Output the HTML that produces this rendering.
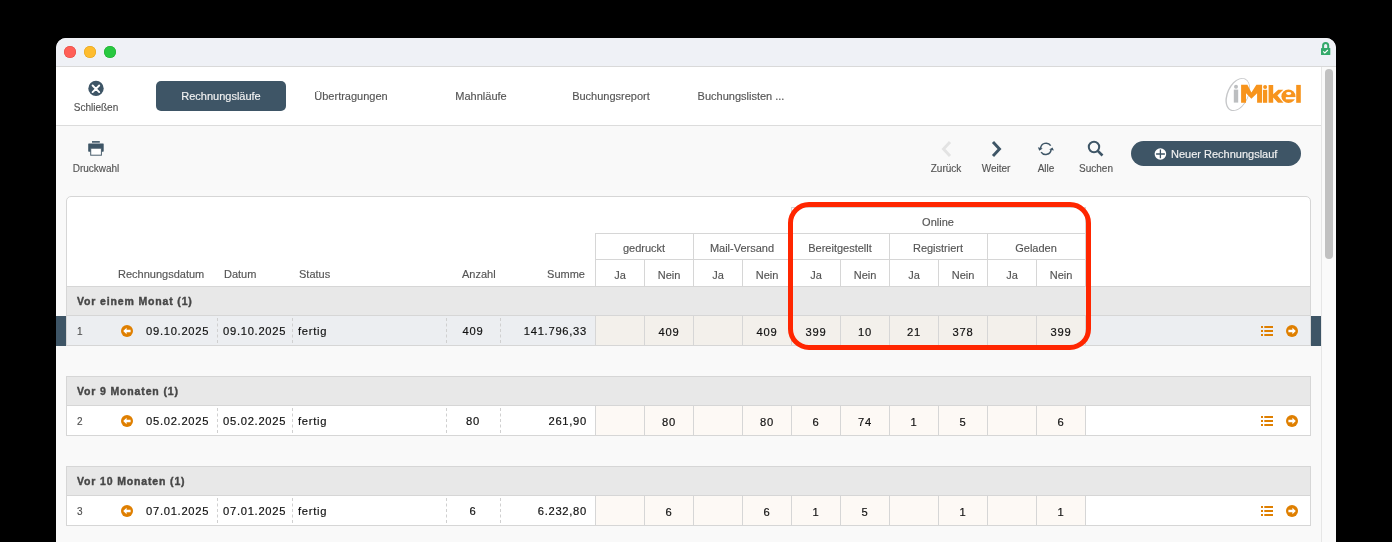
<!DOCTYPE html>
<html><head><meta charset="utf-8"><style>
html,body{margin:0;padding:0;}
body{width:1392px;height:542px;overflow:hidden;background:#000;position:relative;font-family:"Liberation Sans",sans-serif;}
.r{position:absolute;}
.t{position:absolute;white-space:nowrap;will-change:transform;-webkit-text-stroke-width:0.15px;}
</style></head><body>
<div class="r" style="left:56px;top:38px;width:1280px;height:520px;background:#f9f9f9;border-radius:10px 10px 0 0;"></div>
<div class="r" style="left:56px;top:38px;width:1280px;height:28px;background:#eff1f6;border-radius:10px 10px 0 0;"></div>
<div class="r" style="left:56px;top:66px;width:1280px;height:1px;background:#d9d9d9;"></div>
<div class="r" style="left:64px;top:46px;width:12px;height:12px;border-radius:50%;background:#ff5f57;box-shadow:inset 0 0 0 0.5px #e2463f;"></div>
<div class="r" style="left:84px;top:46px;width:12px;height:12px;border-radius:50%;background:#febc2e;box-shadow:inset 0 0 0 0.5px #e1a116;"></div>
<div class="r" style="left:104px;top:46px;width:12px;height:12px;border-radius:50%;background:#28c840;box-shadow:inset 0 0 0 0.5px #1aab29;"></div>
<svg class="r" style="left:1319px;top:40px" width="14" height="17" viewBox="0 0 14 17">
<path d="M4.1 8.5 V5.6 a2.55 2.55 0 0 1 5.1 0 V8.5" fill="none" stroke="#34a96a" stroke-width="2"/>
<rect x="2" y="8" width="9.3" height="7" rx="0.6" fill="#34a96a"/>
<path d="M4.2 11.4 l1.6 1.5 l3.1 -2.9" fill="none" stroke="#fff" stroke-width="1.1"/>
</svg>
<div class="r" style="left:56px;top:67px;width:1265px;height:58px;background:#ffffff;"></div>
<div class="r" style="left:56px;top:125px;width:1265px;height:1px;background:#dcdcdc;"></div>
<div class="r" style="left:1321px;top:67px;width:1px;height:480px;background:#e6e6e6;"></div>
<div class="r" style="left:1322px;top:67px;width:14px;height:480px;background:#fafafa;"></div>
<div class="r" style="left:1325px;top:69px;width:8px;height:190px;background:#c1c1c1;border-radius:4px;"></div>
<svg class="r" style="left:87px;top:79px" width="18" height="18" viewBox="0 0 18 18">
<circle cx="9" cy="9.4" r="7.7" fill="#3e5566"/>
<path d="M5.6 6.5 L12.2 13.1 M12.2 6.5 L5.6 13.1" stroke="#fff" stroke-width="1.9" stroke-linecap="round"/>
</svg>
<div class="t" style="left:-54px;width:300px;text-align:center;top:102.53px;font-size:10px;line-height:10px;color:#555555;font-weight:normal;">Schließen</div>
<div class="r" style="left:156px;top:81px;width:130px;height:30px;background:#3e5566;border-radius:5px;"></div>
<div class="t" style="left:71px;width:300px;text-align:center;top:90.69px;font-size:11px;line-height:11px;color:#f2f2f2;font-weight:normal;">Rechnungsläufe</div>
<div class="t" style="left:201px;width:300px;text-align:center;top:90.69px;font-size:11px;line-height:11px;color:#555555;font-weight:normal;">Übertragungen</div>
<div class="t" style="left:331px;width:300px;text-align:center;top:90.69px;font-size:11px;line-height:11px;color:#555555;font-weight:normal;">Mahnläufe</div>
<div class="t" style="left:461px;width:300px;text-align:center;top:90.69px;font-size:11px;line-height:11px;color:#555555;font-weight:normal;">Buchungsreport</div>
<div class="t" style="left:591px;width:300px;text-align:center;top:90.69px;font-size:11px;line-height:11px;color:#555555;font-weight:normal;">Buchungslisten ...</div>
<svg class="r" style="left:1220px;top:74px" width="90" height="40" viewBox="1220 74 90 40">
<g transform="rotate(25 1237.7 94.5)">
<path fill="#c6c7c9" fill-rule="evenodd" d="M1237.7 76.90 a10.8 17.6 0 1 0 0.001 0 Z M1238.00 77.70 a9.7 16.6 0 1 0 0.001 0 Z"/>
</g>
<g fill="#bcbec0"><circle cx="1236" cy="86.8" r="2"/><rect x="1233.8" y="89.6" width="4.4" height="13"/></g>
<g fill="#f7941d">
<path d="M1241.1 84.8 H1247.4 L1251.4 92.6 L1256.4 84.8 H1262.1 V102.8 H1257.1 V93.2 L1251.4 98.8 L1246 93.2 V102.8 H1241.1 Z"/>
<circle cx="1265.1" cy="86.9" r="2"/><rect x="1263" y="89.8" width="4.2" height="13"/>
<path d="M1268.6 84.9 H1273.2 V94.3 L1278.2 89.8 H1283.3 L1277.4 95.6 L1283.5 102.8 H1278 L1273.2 97.4 V102.8 H1268.6 Z"/>
<ellipse cx="1288.45" cy="96.2" rx="7.05" ry="6.8"/>
<rect x="1296.2" y="84.9" width="4.6" height="17.9"/>
</g>
<ellipse cx="1288.7" cy="93.55" rx="2.6" ry="1.45" fill="#fff"/>
<path d="M1285.8 97.1 H1296 V99.3 H1285.8 Z" fill="#fff"/>
</svg>
<svg class="r" style="left:88px;top:140px" width="16" height="17" viewBox="0 0 16 17">
<rect x="4" y="1.1" width="7.8" height="1.6" fill="#3e5566"/>
<rect x="0.2" y="3.5" width="15.5" height="8.2" rx="0.6" fill="#3e5566"/>
<rect x="2.7" y="8.2" width="10.7" height="7" fill="#fff" stroke="#4a5f6d" stroke-width="1"/>
</svg>
<div class="t" style="left:-54px;width:300px;text-align:center;top:163.53px;font-size:10px;line-height:10px;color:#555555;font-weight:normal;">Druckwahl</div>
<svg class="r" style="left:940px;top:140px" width="13" height="18" viewBox="0 0 13 18">
<path d="M10 2 L3.5 9 L10 16" fill="none" stroke="#e3e3e3" stroke-width="2.9"/>
</svg>
<svg class="r" style="left:990px;top:140px" width="13" height="18" viewBox="0 0 13 18">
<path d="M3 2 L9.5 9 L3 16" fill="none" stroke="#3e5566" stroke-width="2.9"/>
</svg>
<svg class="r" style="left:1037px;top:141px" width="18" height="16" viewBox="0 0 18 16">
<path d="M3.6 7.4 A5.5 5.5 0 0 1 13.7 4.7" fill="none" stroke="#3e5566" stroke-width="1.5"/>
<path d="M14.1 8.6 A5.5 5.5 0 0 1 4.1 11.1" fill="none" stroke="#3e5566" stroke-width="1.5"/>
<path d="M0.9 6.3 L5.7 7.4 L2.3 9.7 Z" fill="#3e5566"/>
<path d="M16.9 9.5 L12.2 8.5 L15.5 6.4 Z" fill="#3e5566"/>
</svg>
<svg class="r" style="left:1087px;top:140px" width="18" height="18" viewBox="0 0 18 18">
<circle cx="7" cy="7" r="5.2" fill="none" stroke="#3e5566" stroke-width="2"/>
<path d="M10.8 10.8 L15.5 15.5" stroke="#3e5566" stroke-width="2.6"/>
</svg>
<div class="t" style="left:796px;width:300px;text-align:center;top:163.53px;font-size:10px;line-height:10px;color:#555555;font-weight:normal;">Zurück</div>
<div class="t" style="left:846px;width:300px;text-align:center;top:163.53px;font-size:10px;line-height:10px;color:#555555;font-weight:normal;">Weiter</div>
<div class="t" style="left:896px;width:300px;text-align:center;top:163.53px;font-size:10px;line-height:10px;color:#555555;font-weight:normal;">Alle</div>
<div class="t" style="left:946px;width:300px;text-align:center;top:163.53px;font-size:10px;line-height:10px;color:#555555;font-weight:normal;">Suchen</div>
<div class="r" style="left:1131px;top:141px;width:170px;height:25px;background:#3e5566;border-radius:12.5px;"></div>
<svg class="r" style="left:1154px;top:148px" width="13" height="13" viewBox="0 0 13 13">
<circle cx="6.4" cy="6.0" r="5.8" fill="#fff"/>
<path d="M6.4 1.5 V10.2 M2.1 6.0 H10.9" stroke="#3e5566" stroke-width="1.3"/>
</svg>
<div class="t" style="left:1171px;top:148.69px;font-size:11px;line-height:11px;color:#f2f2f2;font-weight:normal;">Neuer Rechnungslauf</div>
<div class="r" style="left:66px;top:196px;width:1245px;height:150px;background:#ffffff;border:1px solid #d6d6d6;border-radius:5px 5px 0 0;box-sizing:border-box;"></div>
<div class="t" style="left:118px;top:268.69px;font-size:11px;line-height:11px;color:#555555;font-weight:normal;">Rechnungsdatum</div>
<div class="t" style="left:223.5px;top:268.69px;font-size:11px;line-height:11px;color:#555555;font-weight:normal;">Datum</div>
<div class="t" style="left:298.5px;top:268.69px;font-size:11px;line-height:11px;color:#555555;font-weight:normal;">Status</div>
<div class="t" style="left:461.5px;top:268.69px;font-size:11px;line-height:11px;color:#555555;font-weight:normal;">Anzahl</div>
<div class="t" style="left:285px;width:300px;text-align:right;top:268.69px;font-size:11px;line-height:11px;color:#555555;font-weight:normal;">Summe</div>
<div class="r" style="left:791px;top:207px;width:295px;height:1px;background:#d6d6d6;"></div>
<div class="r" style="left:595px;top:233px;width:491px;height:1px;background:#d6d6d6;"></div>
<div class="r" style="left:595px;top:259px;width:491px;height:1px;background:#d6d6d6;"></div>
<div class="r" style="left:595px;top:233px;width:1px;height:53px;background:#d6d6d6;"></div>
<div class="r" style="left:693px;top:233px;width:1px;height:53px;background:#d6d6d6;"></div>
<div class="r" style="left:791px;top:207px;width:1px;height:79px;background:#d6d6d6;"></div>
<div class="r" style="left:889px;top:233px;width:1px;height:53px;background:#d6d6d6;"></div>
<div class="r" style="left:987px;top:233px;width:1px;height:53px;background:#d6d6d6;"></div>
<div class="r" style="left:1085px;top:207px;width:1px;height:79px;background:#d6d6d6;"></div>
<div class="r" style="left:644px;top:259px;width:1px;height:27px;background:#d6d6d6;"></div>
<div class="r" style="left:742px;top:259px;width:1px;height:27px;background:#d6d6d6;"></div>
<div class="r" style="left:840px;top:259px;width:1px;height:27px;background:#d6d6d6;"></div>
<div class="r" style="left:938px;top:259px;width:1px;height:27px;background:#d6d6d6;"></div>
<div class="r" style="left:1036px;top:259px;width:1px;height:27px;background:#d6d6d6;"></div>
<div class="t" style="left:788px;width:300px;text-align:center;top:216.69px;font-size:11px;line-height:11px;color:#555555;font-weight:normal;">Online</div>
<div class="t" style="left:494px;width:300px;text-align:center;top:242.69px;font-size:11px;line-height:11px;color:#555555;font-weight:normal;">gedruckt</div>
<div class="t" style="left:592px;width:300px;text-align:center;top:242.69px;font-size:11px;line-height:11px;color:#555555;font-weight:normal;">Mail-Versand</div>
<div class="t" style="left:690px;width:300px;text-align:center;top:242.69px;font-size:11px;line-height:11px;color:#555555;font-weight:normal;">Bereitgestellt</div>
<div class="t" style="left:788px;width:300px;text-align:center;top:242.69px;font-size:11px;line-height:11px;color:#555555;font-weight:normal;">Registriert</div>
<div class="t" style="left:886px;width:300px;text-align:center;top:242.69px;font-size:11px;line-height:11px;color:#555555;font-weight:normal;">Geladen</div>
<div class="t" style="left:469.5px;width:300px;text-align:center;top:269.69px;font-size:11px;line-height:11px;color:#555555;font-weight:normal;">Ja</div>
<div class="t" style="left:518.5px;width:300px;text-align:center;top:269.69px;font-size:11px;line-height:11px;color:#555555;font-weight:normal;">Nein</div>
<div class="t" style="left:567.5px;width:300px;text-align:center;top:269.69px;font-size:11px;line-height:11px;color:#555555;font-weight:normal;">Ja</div>
<div class="t" style="left:616.5px;width:300px;text-align:center;top:269.69px;font-size:11px;line-height:11px;color:#555555;font-weight:normal;">Nein</div>
<div class="t" style="left:665.5px;width:300px;text-align:center;top:269.69px;font-size:11px;line-height:11px;color:#555555;font-weight:normal;">Ja</div>
<div class="t" style="left:714.5px;width:300px;text-align:center;top:269.69px;font-size:11px;line-height:11px;color:#555555;font-weight:normal;">Nein</div>
<div class="t" style="left:763.5px;width:300px;text-align:center;top:269.69px;font-size:11px;line-height:11px;color:#555555;font-weight:normal;">Ja</div>
<div class="t" style="left:812.5px;width:300px;text-align:center;top:269.69px;font-size:11px;line-height:11px;color:#555555;font-weight:normal;">Nein</div>
<div class="t" style="left:861.5px;width:300px;text-align:center;top:269.69px;font-size:11px;line-height:11px;color:#555555;font-weight:normal;">Ja</div>
<div class="t" style="left:910.5px;width:300px;text-align:center;top:269.69px;font-size:11px;line-height:11px;color:#555555;font-weight:normal;">Nein</div>
<div class="r" style="left:67px;top:287px;width:1243px;height:28px;background:#e8e8e8;"></div>
<div class="r" style="left:67px;top:286px;width:1243px;height:1px;background:#d6d6d6;"></div>
<div class="r" style="left:67px;top:315px;width:1243px;height:1px;background:#d6d6d6;"></div>
<div class="t" style="left:77px;top:296.11px;font-size:10.5px;line-height:10.5px;color:#474747;font-weight:bold;letter-spacing:0.85px;-webkit-text-stroke:0.4px #474747;">Vor einem Monat (1)</div>
<div class="r" style="left:67px;top:316px;width:1243px;height:29px;background:#eceef1;"></div>
<div class="r" style="left:595px;top:316px;width:490px;height:29px;background:#f3f0eb;"></div>
<div class="r" style="left:595px;top:316px;width:1px;height:29px;background:#d6d6d6;"></div>
<div class="r" style="left:644px;top:316px;width:1px;height:29px;background:#d6d6d6;"></div>
<div class="r" style="left:693px;top:316px;width:1px;height:29px;background:#d6d6d6;"></div>
<div class="r" style="left:742px;top:316px;width:1px;height:29px;background:#d6d6d6;"></div>
<div class="r" style="left:791px;top:316px;width:1px;height:29px;background:#d6d6d6;"></div>
<div class="r" style="left:840px;top:316px;width:1px;height:29px;background:#d6d6d6;"></div>
<div class="r" style="left:889px;top:316px;width:1px;height:29px;background:#d6d6d6;"></div>
<div class="r" style="left:938px;top:316px;width:1px;height:29px;background:#d6d6d6;"></div>
<div class="r" style="left:987px;top:316px;width:1px;height:29px;background:#d6d6d6;"></div>
<div class="r" style="left:1036px;top:316px;width:1px;height:29px;background:#d6d6d6;"></div>
<div class="r" style="left:1085px;top:316px;width:1px;height:29px;background:#d6d6d6;"></div>
<div class="r" style="left:66px;top:345px;width:1245px;height:1px;background:#d6d6d6;"></div>
<div class="r" style="left:56px;top:316px;width:10px;height:30px;background:#3e5566;"></div>
<div class="r" style="left:1311px;top:316px;width:10px;height:30px;background:#3e5566;"></div>
<div class="r" style="left:217px;top:318px;width:0;height:25px;border-left:1px dashed #d0d0d0;"></div>
<div class="r" style="left:292px;top:318px;width:0;height:25px;border-left:1px dashed #d0d0d0;"></div>
<div class="r" style="left:446px;top:318px;width:0;height:25px;border-left:1px dashed #d0d0d0;"></div>
<div class="r" style="left:500px;top:318px;width:0;height:25px;border-left:1px dashed #d0d0d0;"></div>
<div class="t" style="left:76.5px;top:327.04px;font-size:10px;line-height:10px;color:#505050;font-weight:normal;-webkit-text-stroke:0.15px #505050;">1</div>
<svg class="r" style="left:120px;top:324px" width="14" height="14" viewBox="0 0 14 14">
<circle cx="7" cy="7" r="6" fill="#df7f00"/>
<path d="M3.2 7 L6.6 3.8 V5.8 H10.6 V8.2 H6.6 V10.2 Z" fill="#fff"/>
</svg>
<div class="t" style="left:146px;top:326.02px;font-size:11.2px;line-height:11.2px;color:#111111;font-weight:normal;letter-spacing:0.72px;-webkit-text-stroke:0.18px #111111;">09.10.2025</div>
<div class="t" style="left:223px;top:326.02px;font-size:11.2px;line-height:11.2px;color:#111111;font-weight:normal;letter-spacing:0.72px;-webkit-text-stroke:0.18px #111111;">09.10.2025</div>
<div class="t" style="left:298px;top:326.02px;font-size:11.2px;line-height:11.2px;color:#111111;font-weight:normal;letter-spacing:0.72px;-webkit-text-stroke:0.18px #111111;">fertig</div>
<div class="t" style="left:323px;width:300px;text-align:center;top:326.02px;font-size:11.2px;line-height:11.2px;color:#111111;font-weight:normal;letter-spacing:0.72px;-webkit-text-stroke:0.18px #111111;">409</div>
<div class="t" style="left:287px;width:300px;text-align:right;top:326.02px;font-size:11.2px;line-height:11.2px;color:#111111;font-weight:normal;letter-spacing:0.72px;-webkit-text-stroke:0.18px #111111;">141.796,33</div>
<div class="t" style="left:518.5px;width:300px;text-align:center;top:327.02px;font-size:11.2px;line-height:11.2px;color:#111111;font-weight:normal;letter-spacing:0.72px;-webkit-text-stroke:0.18px #111111;">409</div>
<div class="t" style="left:616.5px;width:300px;text-align:center;top:327.02px;font-size:11.2px;line-height:11.2px;color:#111111;font-weight:normal;letter-spacing:0.72px;-webkit-text-stroke:0.18px #111111;">409</div>
<div class="t" style="left:665.5px;width:300px;text-align:center;top:327.02px;font-size:11.2px;line-height:11.2px;color:#111111;font-weight:normal;letter-spacing:0.72px;-webkit-text-stroke:0.18px #111111;">399</div>
<div class="t" style="left:714.5px;width:300px;text-align:center;top:327.02px;font-size:11.2px;line-height:11.2px;color:#111111;font-weight:normal;letter-spacing:0.72px;-webkit-text-stroke:0.18px #111111;">10</div>
<div class="t" style="left:763.5px;width:300px;text-align:center;top:327.02px;font-size:11.2px;line-height:11.2px;color:#111111;font-weight:normal;letter-spacing:0.72px;-webkit-text-stroke:0.18px #111111;">21</div>
<div class="t" style="left:812.5px;width:300px;text-align:center;top:327.02px;font-size:11.2px;line-height:11.2px;color:#111111;font-weight:normal;letter-spacing:0.72px;-webkit-text-stroke:0.18px #111111;">378</div>
<div class="t" style="left:910.5px;width:300px;text-align:center;top:327.02px;font-size:11.2px;line-height:11.2px;color:#111111;font-weight:normal;letter-spacing:0.72px;-webkit-text-stroke:0.18px #111111;">399</div>
<svg class="r" style="left:1260px;top:325px" width="14" height="11" viewBox="0 0 14 11">
<rect x="1" y="1" width="2" height="2" fill="#df7f00"/><rect x="4.3" y="1" width="8.7" height="2" fill="#df7f00"/>
<rect x="1" y="5" width="2" height="2" fill="#df7f00"/><rect x="4.3" y="5" width="8.7" height="2" fill="#df7f00"/>
<rect x="1" y="9" width="2" height="2" fill="#df7f00"/><rect x="4.3" y="9" width="8.7" height="2" fill="#df7f00"/>
</svg>
<svg class="r" style="left:1285px;top:324px" width="14" height="14" viewBox="0 0 14 14">
<circle cx="7" cy="7" r="6" fill="#df7f00"/>
<path d="M10.8 7 L7.4 3.8 V5.8 H3.4 V8.2 H7.4 V10.2 Z" fill="#fff"/>
</svg>
<div class="r" style="left:66px;top:376px;width:1245px;height:60px;background:#ffffff;border:1px solid #d6d6d6;box-sizing:border-box;"></div>
<div class="r" style="left:67px;top:377px;width:1243px;height:28px;background:#e8e8e8;"></div>
<div class="r" style="left:67px;top:405px;width:1243px;height:1px;background:#d6d6d6;"></div>
<div class="t" style="left:77px;top:386.11px;font-size:10.5px;line-height:10.5px;color:#474747;font-weight:bold;letter-spacing:0.85px;-webkit-text-stroke:0.4px #474747;">Vor 9 Monaten (1)</div>
<div class="r" style="left:67px;top:406px;width:1243px;height:29px;background:#ffffff;"></div>
<div class="r" style="left:595px;top:406px;width:490px;height:29px;background:#fdf9f5;"></div>
<div class="r" style="left:595px;top:406px;width:1px;height:29px;background:#d6d6d6;"></div>
<div class="r" style="left:644px;top:406px;width:1px;height:29px;background:#d6d6d6;"></div>
<div class="r" style="left:693px;top:406px;width:1px;height:29px;background:#d6d6d6;"></div>
<div class="r" style="left:742px;top:406px;width:1px;height:29px;background:#d6d6d6;"></div>
<div class="r" style="left:791px;top:406px;width:1px;height:29px;background:#d6d6d6;"></div>
<div class="r" style="left:840px;top:406px;width:1px;height:29px;background:#d6d6d6;"></div>
<div class="r" style="left:889px;top:406px;width:1px;height:29px;background:#d6d6d6;"></div>
<div class="r" style="left:938px;top:406px;width:1px;height:29px;background:#d6d6d6;"></div>
<div class="r" style="left:987px;top:406px;width:1px;height:29px;background:#d6d6d6;"></div>
<div class="r" style="left:1036px;top:406px;width:1px;height:29px;background:#d6d6d6;"></div>
<div class="r" style="left:1085px;top:406px;width:1px;height:29px;background:#d6d6d6;"></div>
<div class="r" style="left:66px;top:435px;width:1245px;height:1px;background:#d6d6d6;"></div>
<div class="r" style="left:217px;top:408px;width:0;height:25px;border-left:1px dashed #d0d0d0;"></div>
<div class="r" style="left:292px;top:408px;width:0;height:25px;border-left:1px dashed #d0d0d0;"></div>
<div class="r" style="left:446px;top:408px;width:0;height:25px;border-left:1px dashed #d0d0d0;"></div>
<div class="r" style="left:500px;top:408px;width:0;height:25px;border-left:1px dashed #d0d0d0;"></div>
<div class="t" style="left:76.5px;top:417.04px;font-size:10px;line-height:10px;color:#505050;font-weight:normal;-webkit-text-stroke:0.15px #505050;">2</div>
<svg class="r" style="left:120px;top:414px" width="14" height="14" viewBox="0 0 14 14">
<circle cx="7" cy="7" r="6" fill="#df7f00"/>
<path d="M3.2 7 L6.6 3.8 V5.8 H10.6 V8.2 H6.6 V10.2 Z" fill="#fff"/>
</svg>
<div class="t" style="left:146px;top:416.02px;font-size:11.2px;line-height:11.2px;color:#111111;font-weight:normal;letter-spacing:0.72px;-webkit-text-stroke:0.18px #111111;">05.02.2025</div>
<div class="t" style="left:223px;top:416.02px;font-size:11.2px;line-height:11.2px;color:#111111;font-weight:normal;letter-spacing:0.72px;-webkit-text-stroke:0.18px #111111;">05.02.2025</div>
<div class="t" style="left:298px;top:416.02px;font-size:11.2px;line-height:11.2px;color:#111111;font-weight:normal;letter-spacing:0.72px;-webkit-text-stroke:0.18px #111111;">fertig</div>
<div class="t" style="left:323px;width:300px;text-align:center;top:416.02px;font-size:11.2px;line-height:11.2px;color:#111111;font-weight:normal;letter-spacing:0.72px;-webkit-text-stroke:0.18px #111111;">80</div>
<div class="t" style="left:287px;width:300px;text-align:right;top:416.02px;font-size:11.2px;line-height:11.2px;color:#111111;font-weight:normal;letter-spacing:0.72px;-webkit-text-stroke:0.18px #111111;">261,90</div>
<div class="t" style="left:518.5px;width:300px;text-align:center;top:417.02px;font-size:11.2px;line-height:11.2px;color:#111111;font-weight:normal;letter-spacing:0.72px;-webkit-text-stroke:0.18px #111111;">80</div>
<div class="t" style="left:616.5px;width:300px;text-align:center;top:417.02px;font-size:11.2px;line-height:11.2px;color:#111111;font-weight:normal;letter-spacing:0.72px;-webkit-text-stroke:0.18px #111111;">80</div>
<div class="t" style="left:665.5px;width:300px;text-align:center;top:417.02px;font-size:11.2px;line-height:11.2px;color:#111111;font-weight:normal;letter-spacing:0.72px;-webkit-text-stroke:0.18px #111111;">6</div>
<div class="t" style="left:714.5px;width:300px;text-align:center;top:417.02px;font-size:11.2px;line-height:11.2px;color:#111111;font-weight:normal;letter-spacing:0.72px;-webkit-text-stroke:0.18px #111111;">74</div>
<div class="t" style="left:763.5px;width:300px;text-align:center;top:417.02px;font-size:11.2px;line-height:11.2px;color:#111111;font-weight:normal;letter-spacing:0.72px;-webkit-text-stroke:0.18px #111111;">1</div>
<div class="t" style="left:812.5px;width:300px;text-align:center;top:417.02px;font-size:11.2px;line-height:11.2px;color:#111111;font-weight:normal;letter-spacing:0.72px;-webkit-text-stroke:0.18px #111111;">5</div>
<div class="t" style="left:910.5px;width:300px;text-align:center;top:417.02px;font-size:11.2px;line-height:11.2px;color:#111111;font-weight:normal;letter-spacing:0.72px;-webkit-text-stroke:0.18px #111111;">6</div>
<svg class="r" style="left:1260px;top:415px" width="14" height="11" viewBox="0 0 14 11">
<rect x="1" y="1" width="2" height="2" fill="#df7f00"/><rect x="4.3" y="1" width="8.7" height="2" fill="#df7f00"/>
<rect x="1" y="5" width="2" height="2" fill="#df7f00"/><rect x="4.3" y="5" width="8.7" height="2" fill="#df7f00"/>
<rect x="1" y="9" width="2" height="2" fill="#df7f00"/><rect x="4.3" y="9" width="8.7" height="2" fill="#df7f00"/>
</svg>
<svg class="r" style="left:1285px;top:414px" width="14" height="14" viewBox="0 0 14 14">
<circle cx="7" cy="7" r="6" fill="#df7f00"/>
<path d="M10.8 7 L7.4 3.8 V5.8 H3.4 V8.2 H7.4 V10.2 Z" fill="#fff"/>
</svg>
<div class="r" style="left:66px;top:466px;width:1245px;height:60px;background:#ffffff;border:1px solid #d6d6d6;box-sizing:border-box;"></div>
<div class="r" style="left:67px;top:467px;width:1243px;height:28px;background:#e8e8e8;"></div>
<div class="r" style="left:67px;top:495px;width:1243px;height:1px;background:#d6d6d6;"></div>
<div class="t" style="left:77px;top:476.11px;font-size:10.5px;line-height:10.5px;color:#474747;font-weight:bold;letter-spacing:0.85px;-webkit-text-stroke:0.4px #474747;">Vor 10 Monaten (1)</div>
<div class="r" style="left:67px;top:496px;width:1243px;height:29px;background:#ffffff;"></div>
<div class="r" style="left:595px;top:496px;width:490px;height:29px;background:#fdf9f5;"></div>
<div class="r" style="left:595px;top:496px;width:1px;height:29px;background:#d6d6d6;"></div>
<div class="r" style="left:644px;top:496px;width:1px;height:29px;background:#d6d6d6;"></div>
<div class="r" style="left:693px;top:496px;width:1px;height:29px;background:#d6d6d6;"></div>
<div class="r" style="left:742px;top:496px;width:1px;height:29px;background:#d6d6d6;"></div>
<div class="r" style="left:791px;top:496px;width:1px;height:29px;background:#d6d6d6;"></div>
<div class="r" style="left:840px;top:496px;width:1px;height:29px;background:#d6d6d6;"></div>
<div class="r" style="left:889px;top:496px;width:1px;height:29px;background:#d6d6d6;"></div>
<div class="r" style="left:938px;top:496px;width:1px;height:29px;background:#d6d6d6;"></div>
<div class="r" style="left:987px;top:496px;width:1px;height:29px;background:#d6d6d6;"></div>
<div class="r" style="left:1036px;top:496px;width:1px;height:29px;background:#d6d6d6;"></div>
<div class="r" style="left:1085px;top:496px;width:1px;height:29px;background:#d6d6d6;"></div>
<div class="r" style="left:66px;top:525px;width:1245px;height:1px;background:#d6d6d6;"></div>
<div class="r" style="left:217px;top:498px;width:0;height:25px;border-left:1px dashed #d0d0d0;"></div>
<div class="r" style="left:292px;top:498px;width:0;height:25px;border-left:1px dashed #d0d0d0;"></div>
<div class="r" style="left:446px;top:498px;width:0;height:25px;border-left:1px dashed #d0d0d0;"></div>
<div class="r" style="left:500px;top:498px;width:0;height:25px;border-left:1px dashed #d0d0d0;"></div>
<div class="t" style="left:76.5px;top:507.04px;font-size:10px;line-height:10px;color:#505050;font-weight:normal;-webkit-text-stroke:0.15px #505050;">3</div>
<svg class="r" style="left:120px;top:504px" width="14" height="14" viewBox="0 0 14 14">
<circle cx="7" cy="7" r="6" fill="#df7f00"/>
<path d="M3.2 7 L6.6 3.8 V5.8 H10.6 V8.2 H6.6 V10.2 Z" fill="#fff"/>
</svg>
<div class="t" style="left:146px;top:506.02px;font-size:11.2px;line-height:11.2px;color:#111111;font-weight:normal;letter-spacing:0.72px;-webkit-text-stroke:0.18px #111111;">07.01.2025</div>
<div class="t" style="left:223px;top:506.02px;font-size:11.2px;line-height:11.2px;color:#111111;font-weight:normal;letter-spacing:0.72px;-webkit-text-stroke:0.18px #111111;">07.01.2025</div>
<div class="t" style="left:298px;top:506.02px;font-size:11.2px;line-height:11.2px;color:#111111;font-weight:normal;letter-spacing:0.72px;-webkit-text-stroke:0.18px #111111;">fertig</div>
<div class="t" style="left:323px;width:300px;text-align:center;top:506.02px;font-size:11.2px;line-height:11.2px;color:#111111;font-weight:normal;letter-spacing:0.72px;-webkit-text-stroke:0.18px #111111;">6</div>
<div class="t" style="left:287px;width:300px;text-align:right;top:506.02px;font-size:11.2px;line-height:11.2px;color:#111111;font-weight:normal;letter-spacing:0.72px;-webkit-text-stroke:0.18px #111111;">6.232,80</div>
<div class="t" style="left:518.5px;width:300px;text-align:center;top:507.02px;font-size:11.2px;line-height:11.2px;color:#111111;font-weight:normal;letter-spacing:0.72px;-webkit-text-stroke:0.18px #111111;">6</div>
<div class="t" style="left:616.5px;width:300px;text-align:center;top:507.02px;font-size:11.2px;line-height:11.2px;color:#111111;font-weight:normal;letter-spacing:0.72px;-webkit-text-stroke:0.18px #111111;">6</div>
<div class="t" style="left:665.5px;width:300px;text-align:center;top:507.02px;font-size:11.2px;line-height:11.2px;color:#111111;font-weight:normal;letter-spacing:0.72px;-webkit-text-stroke:0.18px #111111;">1</div>
<div class="t" style="left:714.5px;width:300px;text-align:center;top:507.02px;font-size:11.2px;line-height:11.2px;color:#111111;font-weight:normal;letter-spacing:0.72px;-webkit-text-stroke:0.18px #111111;">5</div>
<div class="t" style="left:812.5px;width:300px;text-align:center;top:507.02px;font-size:11.2px;line-height:11.2px;color:#111111;font-weight:normal;letter-spacing:0.72px;-webkit-text-stroke:0.18px #111111;">1</div>
<div class="t" style="left:910.5px;width:300px;text-align:center;top:507.02px;font-size:11.2px;line-height:11.2px;color:#111111;font-weight:normal;letter-spacing:0.72px;-webkit-text-stroke:0.18px #111111;">1</div>
<svg class="r" style="left:1260px;top:505px" width="14" height="11" viewBox="0 0 14 11">
<rect x="1" y="1" width="2" height="2" fill="#df7f00"/><rect x="4.3" y="1" width="8.7" height="2" fill="#df7f00"/>
<rect x="1" y="5" width="2" height="2" fill="#df7f00"/><rect x="4.3" y="5" width="8.7" height="2" fill="#df7f00"/>
<rect x="1" y="9" width="2" height="2" fill="#df7f00"/><rect x="4.3" y="9" width="8.7" height="2" fill="#df7f00"/>
</svg>
<svg class="r" style="left:1285px;top:504px" width="14" height="14" viewBox="0 0 14 14">
<circle cx="7" cy="7" r="6" fill="#df7f00"/>
<path d="M10.8 7 L7.4 3.8 V5.8 H3.4 V8.2 H7.4 V10.2 Z" fill="#fff"/>
</svg>
<div class="r" style="left:787.5px;top:201.5px;width:303px;height:148.5px;border:5px solid #ff2600;border-radius:21px;box-sizing:border-box;"></div>
</body></html>
